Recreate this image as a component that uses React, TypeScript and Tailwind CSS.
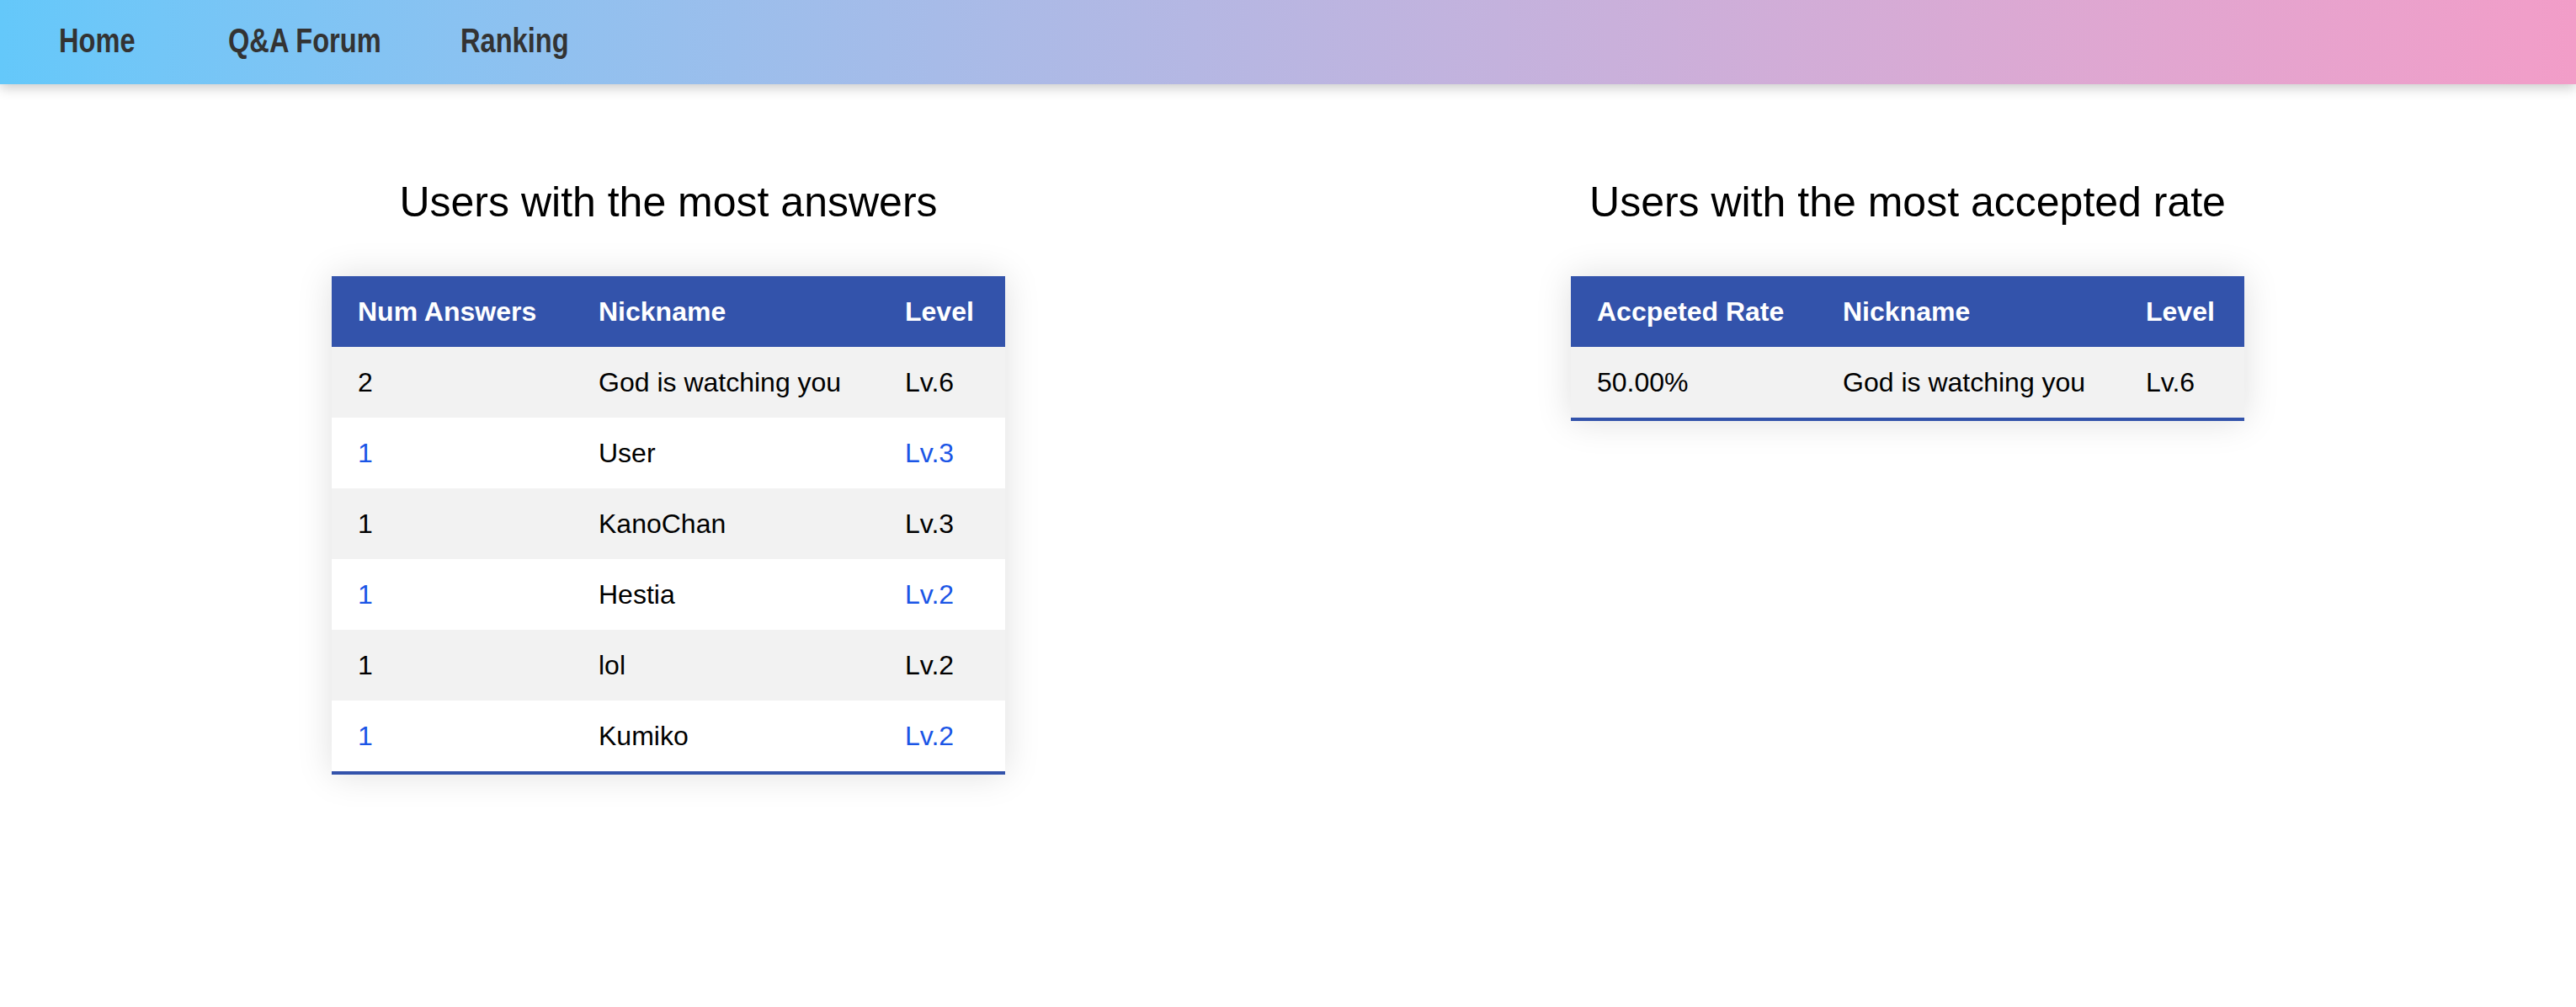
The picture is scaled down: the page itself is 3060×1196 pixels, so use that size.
import React from "react";

const F = { fontFamily: '"Liberation Sans", Arial, Helvetica, sans-serif' };

type Row = { a: string; nick: string; lvl: string };

const answers: Row[] = [
  { a: "2", nick: "God is watching you", lvl: "Lv.6" },
  { a: "1", nick: "User", lvl: "Lv.3" },
  { a: "1", nick: "KanoChan", lvl: "Lv.3" },
  { a: "1", nick: "Hestia", lvl: "Lv.2" },
  { a: "1", nick: "lol", lvl: "Lv.2" },
  { a: "1", nick: "Kumiko", lvl: "Lv.2" },
];

const rates: Row[] = [{ a: "50.00%", nick: "God is watching you", lvl: "Lv.6" }];

function RankTable({
  title,
  head,
  rows,
  w1,
  w2,
  w3,
}: {
  title: string;
  head: string;
  rows: Row[];
  w1: string;
  w2: string;
  w3: string;
}) {
  return (
    <section className="w-[800px] flex flex-col items-center">
      <h2 className="text-[50px] leading-[58px] text-black whitespace-nowrap" style={F}>
        {title}
      </h2>
      <table
        className="mt-[59px] w-[800px] table-fixed border-collapse border-b-4 border-[#3353ab] shadow-[0_0_40px_rgba(0,0,0,0.13)]"
        style={F}
      >
        <colgroup>
          <col className={w1} />
          <col className={w2} />
          <col className={w3} />
        </colgroup>
        <thead>
          <tr className="bg-[#3353ab] text-white text-[32px] leading-[36px] font-bold text-left">
            <th className="py-[24px] pl-[31px] pr-0 font-bold whitespace-nowrap">{head}</th>
            <th className="py-[24px] pl-[32px] pr-0 font-bold">Nickname</th>
            <th className="py-[24px] pl-[32px] pr-0 font-bold">Level</th>
          </tr>
        </thead>
        <tbody>
          {rows.map((r, i) => {
            const odd = i % 2 === 0;
            const accent = odd ? "text-black" : "text-[#1a55e6]";
            return (
              <tr
                key={i}
                className={`text-[32px] leading-[36px] ${odd ? "bg-[#f2f2f2]" : "bg-white"}`}
              >
                <td className={`py-[24px] pl-[31px] pr-0 whitespace-nowrap ${accent}`}>{r.a}</td>
                <td className="py-[24px] pl-[32px] pr-0 text-black whitespace-nowrap">{r.nick}</td>
                <td className={`py-[24px] pl-[32px] pr-0 whitespace-nowrap ${accent}`}>{r.lvl}</td>
              </tr>
            );
          })}
        </tbody>
      </table>
    </section>
  );
}

function NavLink({ label, w }: { label: string; w: string }) {
  return (
    <a className={`${w} block`}>
      <span
        className="inline-block origin-left scale-x-[0.815] text-[40px] font-bold text-[#333333] leading-[46px] whitespace-nowrap"
        style={F}
      >
        {label}
      </span>
    </a>
  );
}

export default function App() {
  return (
    <div className="min-h-[1196px] w-[3060px] bg-white" style={F}>
      <nav className="relative z-10 h-[100px] w-full bg-gradient-to-r from-[#64c8fa] to-[#f29dc8] shadow-[0_4px_14px_rgba(0,0,0,0.22)] flex items-center pl-[70px] pb-[4px]">
        <NavLink label="Home" w="w-[201px]" />
        <NavLink label="Q&A Forum" w="w-[276px]" />
        <NavLink label="Ranking" w="w-[200px]" />
      </nav>
      <main className="flex justify-center items-start gap-[672px] pt-[111px]">
        <RankTable
          title="Users with the most answers"
          head="Num Answers"
          rows={answers}
          w1="w-[285px]"
          w2="w-[364px]"
          w3="w-[151px]"
        />
        <RankTable
          title="Users with the most accepted rate"
          head="Accpeted Rate"
          rows={rates}
          w1="w-[291px]"
          w2="w-[360px]"
          w3="w-[149px]"
        />
      </main>
    </div>
  );
}
